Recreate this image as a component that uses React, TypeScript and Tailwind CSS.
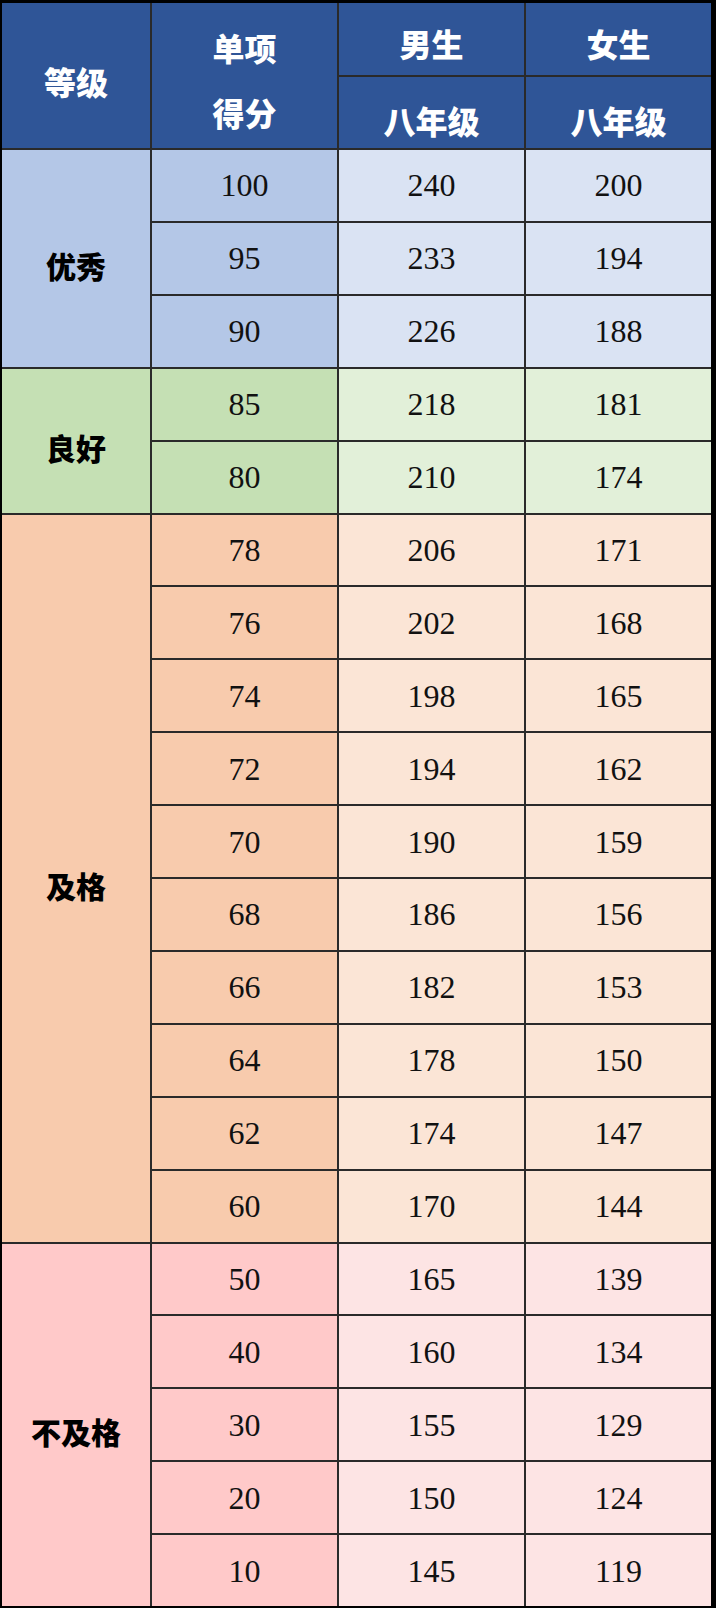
const groups = [
  {
    label: "优秀",
    dark: "bg-[#b4c7e7]",
    light: "bg-[#dae3f3]",
    rows: [
      [100, 240, 200],
      [95, 233, 194],
      [90, 226, 188],
    ],
  },
  {
    label: "良好",
    dark: "bg-[#c5e0b4]",
    light: "bg-[#e2f0d9]",
    rows: [
      [85, 218, 181],
      [80, 210, 174],
    ],
  },
  {
    label: "及格",
    dark: "bg-[#f8cbad]",
    light: "bg-[#fbe5d6]",
    rows: [
      [78, 206, 171],
      [76, 202, 168],
      [74, 198, 165],
      [72, 194, 162],
      [70, 190, 159],
      [68, 186, 156],
      [66, 182, 153],
      [64, 178, 150],
      [62, 174, 147],
      [60, 170, 144],
    ],
  },
  {
    label: "不及格",
    dark: "bg-[#ffc9c9]",
    light: "bg-[#fde4e4]",
    rows: [
      [50, 165, 139],
      [40, 160, 134],
      [30, 155, 129],
      [20, 150, 124],
      [10, 145, 119],
    ],
  },
]

const rowSpan: Record<number, string> = {
  2: "row-span-2",
  3: "row-span-3",
  5: "row-span-5",
  10: "row-span-10",
}

const cjk = "font-['Noto_Sans_CJK_SC',sans-serif]"
const num = "font-['Liberation_Serif',serif] text-[32px] text-[#111]"
const head = `${cjk} bg-[#2f5597] text-white font-black text-[32px] flex items-center justify-center`

export default function App() {
  return (
    <div className="w-[716px] h-[1608px] bg-black pl-[2px] pt-[3px] pr-[5px] pb-[2px]">
      <div className="h-full grid grid-cols-[148px_185px_185px_185px] grid-rows-[72px_71px_repeat(20,1fr)] gap-[2px] bg-[#2a2a2a]">
        <div className={`${head} row-span-2 pt-[10px]`}>等级</div>
        <div className={`${head} row-span-2 flex-col leading-[65px] pt-[8px]`}>
          <span>单项</span>
          <span>得分</span>
        </div>
        <div className={`${head} pt-[8px]`}>男生</div>
        <div className={`${head} pt-[8px]`}>女生</div>
        <div className={`${head} pt-[14px]`}>八年级</div>
        <div className={`${head} pt-[14px]`}>八年级</div>

        {groups.map((g) =>
          g.rows.map((r, i) => (
            <>
              {i === 0 && (
                <div
                  key={g.label}
                  className={`${rowSpan[g.rows.length]} ${g.dark} ${cjk} font-black text-[30px] text-black flex items-center justify-center pt-[14px]`}
                >
                  {g.label}
                </div>
              )}
              <div className={`${g.dark} ${num} flex items-center justify-center`}>{r[0]}</div>
              <div className={`${g.light} ${num} flex items-center justify-center`}>{r[1]}</div>
              <div className={`${g.light} ${num} flex items-center justify-center`}>{r[2]}</div>
            </>
          ))
        )}
      </div>
    </div>
  )
}
